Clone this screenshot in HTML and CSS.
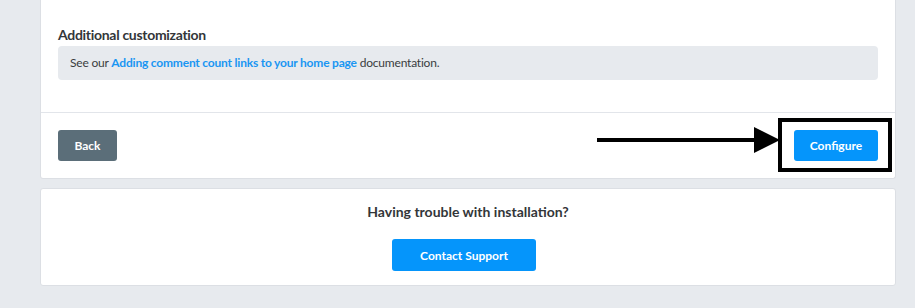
FILE: index.html
```html
<!DOCTYPE html>
<html lang="en">
<head>
<meta charset="utf-8">
<title>Install</title>
<link rel="stylesheet" href="styles.css">
</head>
<body>
<div class="page">
  <div class="card card-main">
    <div class="section">
      <h3 class="sub-title">Additional customization</h3>
      <div class="info">See our <a href="#" class="link">Adding comment count links to your home page</a> documentation.</div>
    </div>
    <div class="footer">
      <button class="btn btn-back">Back</button>
      <div class="configure-wrap">
        <button class="btn btn-primary btn-configure">Configure</button>
        <div class="highlight-box"></div>
        <svg class="arrow" width="184" height="28" viewBox="0 0 184 28">
          <rect x="0" y="12" width="160" height="4" fill="#000"/>
          <polygon points="157,1 183,14 157,27" fill="#000"/>
        </svg>
      </div>
    </div>
  </div>
  <div class="card card-help">
    <div class="help-title">Having trouble with installation?</div>
    <button class="btn btn-primary btn-support">Contact Support</button>
  </div>
</div>
</body>
</html>
```
FILE: styles.css
```css
html, body {
  margin: 0;
  padding: 0;
}
body {
  background: #e7eaee;
  font-family: "Lato", "Noto Sans", sans-serif;
  color: #3a3d40;
  width: 915px;
  height: 308px;
  overflow: hidden;
}
.page {
  padding: 0 19px 0 40px;
  display: flex;
  flex-direction: column;
  gap: 9px;
}
.card {
  background: #fff;
  border: 1px solid #dcdfe4;
  border-radius: 3px;
}
.card-main {
  border-top: none;
  border-radius: 0 0 3px 3px;
}
.section {
  padding: 26px 17px 32px 17px;
}
.sub-title {
  margin: 0 0 2px 0;
  font-size: 14px;
  font-weight: 700;
  line-height: 18px;
  color: #333639;
  letter-spacing: -0.3px;
}
.info {
  background: #e7eaee;
  border-radius: 4px;
  height: 34px;
  line-height: 34px;
  padding: 0 12px;
  font-size: 12px;
  color: #3a3d40;
  letter-spacing: -0.2px;
}
.link {
  color: #1a96f2;
  font-weight: 700;
  text-decoration: none;
}
.footer {
  border-top: 1px solid #e2e5ea;
  padding: 17px 17px 17px 17px;
  display: flex;
  justify-content: space-between;
  align-items: center;
}
.btn {
  border: none;
  border-radius: 3px;
  font-family: "Lato", "Noto Sans", sans-serif;
  font-weight: 700;
  font-size: 12px;
  color: #fff;
  height: 31px;
  padding: 0;
  cursor: pointer;
}
.btn-back {
  background: #5b6e79;
  width: 59px;
}
.btn-primary {
  background: #0595fb;
}
.btn-configure {
  width: 84px;
}
.configure-wrap {
  position: relative;
  display: flex;
}
.highlight-box {
  position: absolute;
  left: -16px;
  top: -12px;
  width: 106px;
  height: 46px;
  border: 4px solid #000;
}
.arrow {
  position: absolute;
  left: -197px;
  top: -4px;
}
.card-help {
  display: flex;
  flex-direction: column;
  align-items: center;
  padding: 14px 0 14px 0;
}
.help-title {
  font-size: 14px;
  font-weight: 700;
  line-height: 18px;
  color: #333639;
  margin-bottom: 18px;
}
.btn-support {
  width: 144px;
  height: 32px;
  margin-right: 8px;
}
```
